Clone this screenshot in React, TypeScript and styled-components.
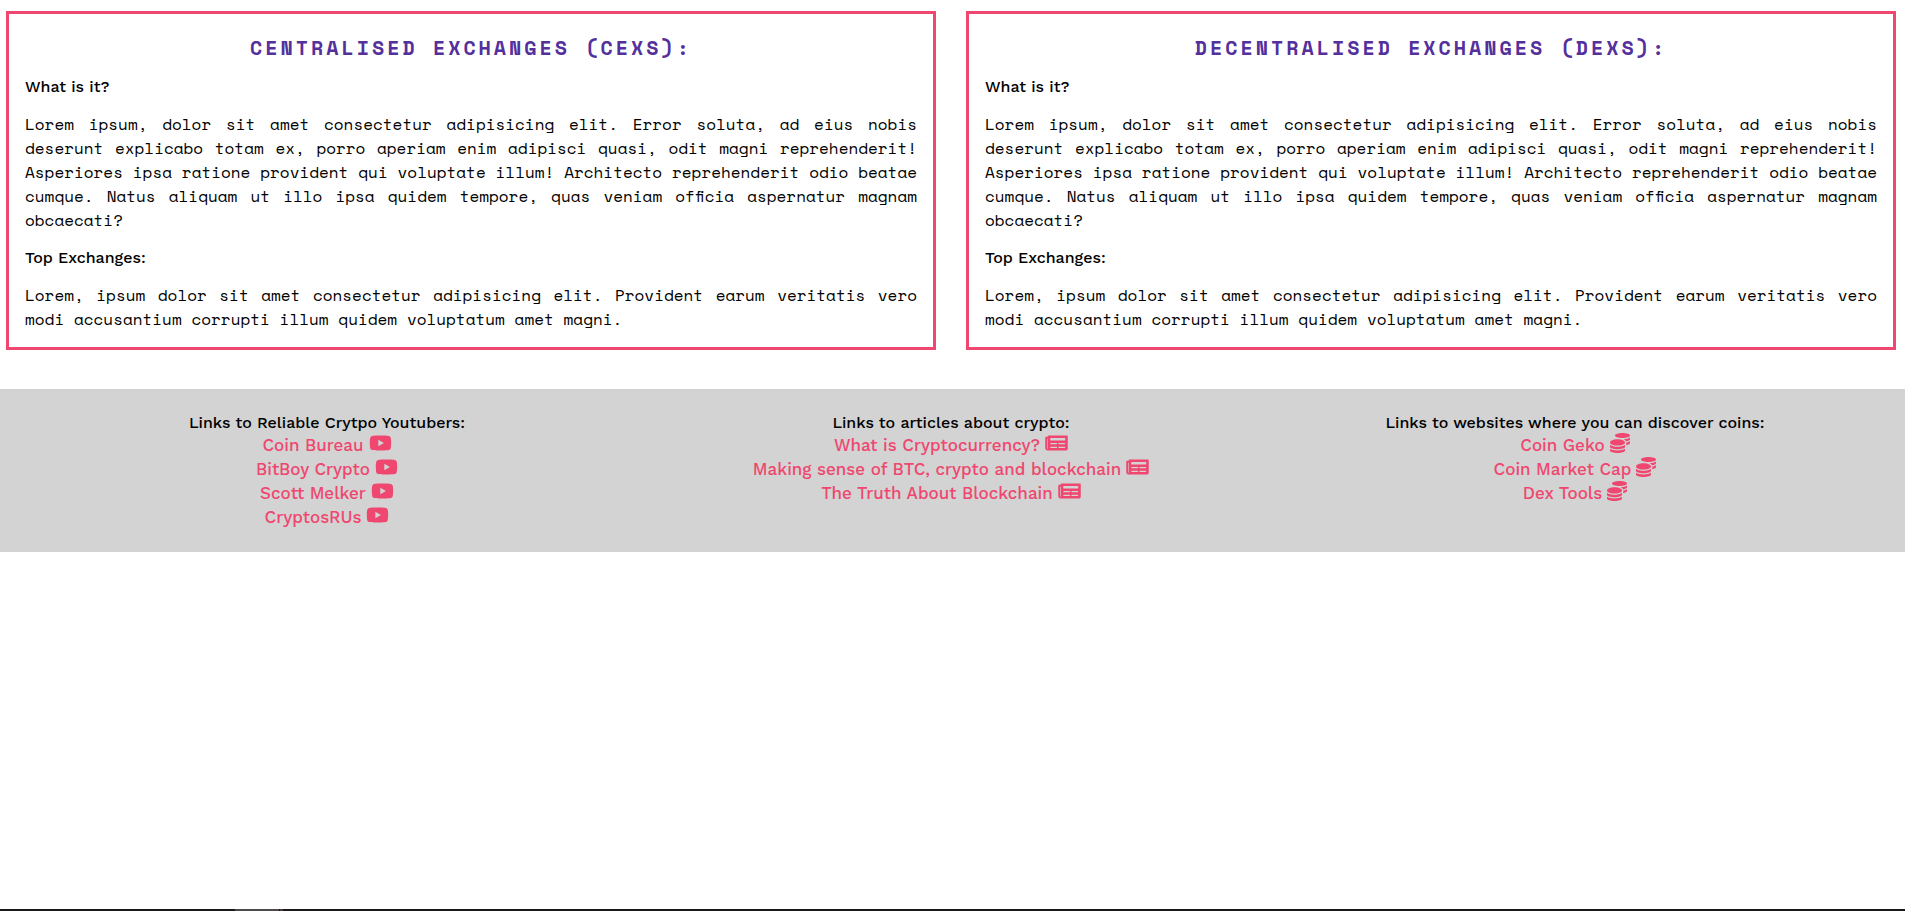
import React from 'react';
import styled, { createGlobalStyle } from 'styled-components';
import type { IconType } from 'react-icons';
import { FaCoins, FaNewspaper, FaYoutube } from 'react-icons/fa';

const pink = '#ef476f';
const purple = '#54309c';
const sans = '"Work Sans", "Noto Sans", sans-serif';
const mono = '"Space Mono", "Liberation Mono", monospace';

const GlobalStyle = createGlobalStyle`
  *, *::before, *::after {
    box-sizing: border-box;
  }

  body {
    margin: 0;
    background: #fff;
    color: #000;
  }

  h2, h3, p, ul {
    margin: 0;
    padding: 0;
  }
`;

const Page = styled.div`
  display: flex;
  flex-direction: column;
  min-height: 100vh;
`;

const Exchanges = styled.main`
  display: grid;
  grid-template-columns: repeat(auto-fit, minmax(min(480px, 100%), 1fr));
  gap: 30px;
  padding: 11px 9px 39px 6px;
`;

const Card = styled.section`
  display: flex;
  flex-direction: column;
  gap: 16px;
  padding: 20px 16px 16px;
  border: 3px solid ${pink};
`;

const CardTitle = styled.h2`
  font: 700 20px/27px ${mono};
  letter-spacing: 3px;
  text-align: center;
  text-transform: uppercase;
  color: ${purple};
`;

const Label = styled.h3`
  font: 500 16px/19px ${sans};
`;

const Copy = styled.p`
  font: 400 16px/24px ${mono};
  font-variant-ligatures: common-ligatures discretionary-ligatures;
  text-align: justify;
`;

const Footer = styled.footer`
  display: grid;
  grid-template-columns: repeat(auto-fit, minmax(min(400px, 100%), 1fr));
  padding: 24px 18px 23px 15px;
  background: #d3d3d3;
`;

const LinkGroup = styled.section`
  display: flex;
  flex-direction: column;
  align-items: center;
`;

const GroupTitle = styled(Label)`
  line-height: 20px;
`;

const LinkList = styled.ul`
  display: flex;
  flex-direction: column;
  align-items: center;
  list-style: none;
`;

const ResourceLink = styled.a`
  display: flex;
  gap: 5px;
  font: 500 17px/24px ${sans};
  font-variant-ligatures: common-ligatures discretionary-ligatures;
  color: ${pink};
  text-decoration: none;
`;

const LinkIcon = styled.svg<{ $wide: boolean }>`
  width: ${({ $wide }) => ($wide ? 23 : 20)}px;
  height: 20px;
`;

const Taskbar = styled.div`
  display: flex;
  gap: 1px;
  height: 2px;
  margin-top: auto;
  padding-left: 235px;
  background: #1b1819;
`;

const TaskbarItem = styled.span<{ $width: number; $color: string }>`
  width: ${({ $width }) => $width}px;
  background: ${({ $color }) => $color};
`;

const exchanges = [
  'Centralised Exchanges (CEXs):',
  'Decentralised Exchanges (DEXs):',
];

const groups: { title: string; icon: IconType; wide: boolean; links: string[] }[] = [
  {
    title: 'Links to Reliable Crytpo Youtubers:',
    icon: FaYoutube,
    wide: true,
    links: ['Coin Bureau', 'BitBoy Crypto', 'Scott Melker', 'CryptosRUs'],
  },
  {
    title: 'Links to articles about crypto:',
    icon: FaNewspaper,
    wide: true,
    links: [
      'What is Cryptocurrency?',
      'Making sense of BTC, crypto and blockchain',
      'The Truth About Blockchain',
    ],
  },
  {
    title: 'Links to websites where you can discover coins:',
    icon: FaCoins,
    wide: false,
    links: ['Coin Geko', 'Coin Market Cap', 'Dex Tools'],
  },
];

export default function App() {
  return (
    <Page>
      <GlobalStyle />
      <Exchanges>
        {exchanges.map((title) => (
          <Card key={title}>
            <CardTitle>{title}</CardTitle>
            <Label>What is it?</Label>
            <Copy>
              Lorem ipsum, dolor sit amet consectetur adipisicing elit. Error soluta, ad eius nobis
              deserunt explicabo totam ex, porro aperiam enim adipisci quasi, odit magni
              reprehenderit! Asperiores ipsa ratione provident qui voluptate illum! Architecto
              reprehenderit odio beatae cumque. Natus aliquam ut illo ipsa quidem tempore, quas
              veniam officia aspernatur magnam obcaecati?
            </Copy>
            <Label>Top Exchanges:</Label>
            <Copy>
              Lorem, ipsum dolor sit amet consectetur adipisicing elit. Provident earum veritatis
              vero modi accusantium corrupti illum quidem voluptatum amet magni.
            </Copy>
          </Card>
        ))}
      </Exchanges>
      <Footer>
        {groups.map(({ title, icon, wide, links }) => (
          <LinkGroup key={title}>
            <GroupTitle>{title}</GroupTitle>
            <LinkList>
              {links.map((link) => (
                <li key={link}>
                  <ResourceLink href="#">
                    {link}
                    <LinkIcon as={icon} $wide={wide} aria-hidden="true" />
                  </ResourceLink>
                </li>
              ))}
            </LinkList>
          </LinkGroup>
        ))}
      </Footer>
      <Taskbar>
        <TaskbarItem $width={44} $color="#4d4a4b" />
        <TaskbarItem $width={3} $color="#4a3c36" />
      </Taskbar>
    </Page>
  );
}
